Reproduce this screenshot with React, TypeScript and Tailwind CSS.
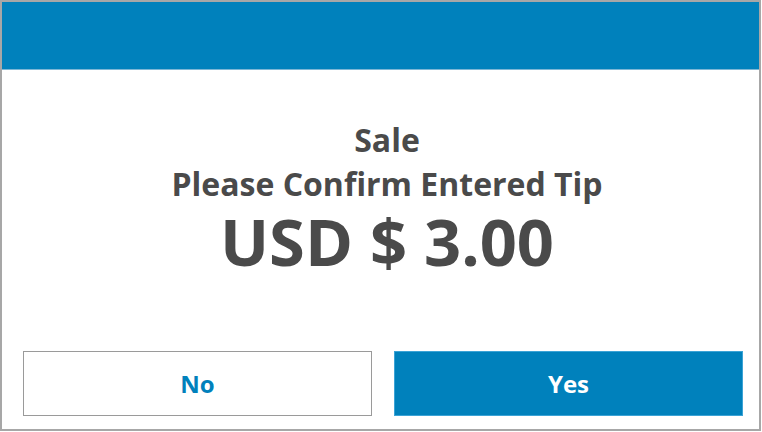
export default function App() {
  return (
    <div className="w-[762px] h-[432px] bg-white">
      <div
        className="flex h-[431px] w-[761px] flex-col border-2 border-[#a7a7a7] bg-white"
        style={{ fontFamily: '"Open Sans", "Noto Sans", sans-serif' }}
      >
        {/* header bar */}
        <div className="h-[68px] shrink-0 border-b border-[#7db7d6] bg-[#0081bc]" />

        {/* message */}
        <div className="flex flex-col items-center pl-[13px] pt-[48px] text-[#4a4a4a]">
          <div className="text-[32px] font-bold leading-[44px]">Sale</div>
          <div className="text-[32px] font-bold leading-[44px]">Please Confirm Entered Tip</div>
          <div className="text-[65px] font-bold leading-[70px]">USD $ 3.00</div>
        </div>

        {/* actions */}
        <div className="mt-auto flex gap-[22px] pb-[13px] pl-[21px]">
          <button className="flex h-[65px] w-[349px] items-center justify-center border border-[#9a9a9a] bg-white text-[24px] font-bold text-[#0081bc]">
            No
          </button>
          <button className="flex h-[65px] w-[349px] items-center justify-center border border-[#3ba3d6] bg-[#0081bc] text-[24px] font-bold text-white">
            Yes
          </button>
        </div>
      </div>
    </div>
  );
}
